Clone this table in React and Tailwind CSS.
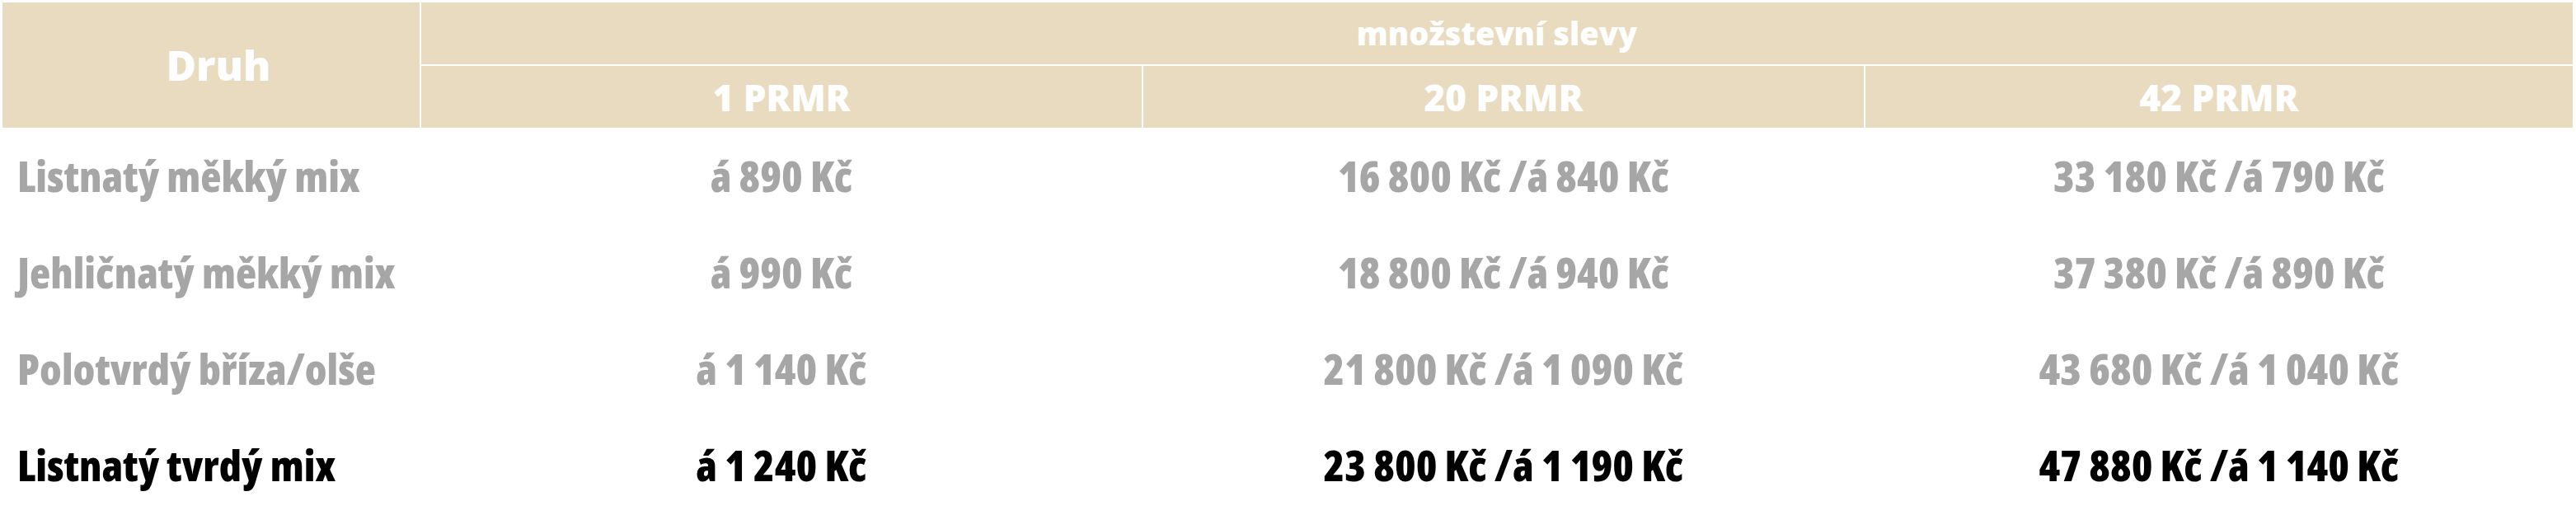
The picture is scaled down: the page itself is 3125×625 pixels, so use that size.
const rows = [
  { name: 'Listnatý měkký mix', p1: 'á 890 Kč', p20: '16 800 Kč /á 840 Kč', p42: '33 180 Kč /á 790 Kč' },
  { name: 'Jehličnatý měkký mix', p1: 'á 990 Kč', p20: '18 800 Kč /á 940 Kč', p42: '37 380 Kč /á 890 Kč' },
  { name: 'Polotvrdý bříza/olše', p1: 'á 1 140 Kč', p20: '21 800 Kč /á 1 090 Kč', p42: '43 680 Kč /á 1 040 Kč' },
  { name: 'Listnatý tvrdý mix', p1: 'á 1 240 Kč', p20: '23 800 Kč /á 1 190 Kč', p42: '47 880 Kč /á 1 140 Kč', dark: true },
];

export default function App() {
  return (
    <div className="w-[3125px] h-[625px] bg-white p-px font-['Open_Sans',sans-serif]">
      <table className="w-[3122px] border-collapse table-fixed">
        <colgroup>
          <col className="w-[508px]" />
          <col className="w-[876px]" />
          <col className="w-[876px]" />
          <col />
        </colgroup>
        <thead>
          <tr className="h-[77px]">
            <th rowSpan={2} className="bg-[#e8dbc0] border-2 border-white pl-[18px] text-white text-[50px] font-extrabold">
              Druh
            </th>
            <th colSpan={3} className="bg-[#e8dbc0] border-2 border-white text-white text-[38px] font-extrabold">
              množstevní slevy
            </th>
          </tr>
          <tr className="h-[77px]">
            <th className="bg-[#e8dbc0] border-2 border-white text-white text-[44px] font-extrabold">1 PRMR</th>
            <th className="bg-[#e8dbc0] border-2 border-white text-white text-[44px] font-extrabold">20 PRMR</th>
            <th className="bg-[#e8dbc0] border-2 border-white text-white text-[44px] font-extrabold">42 PRMR</th>
          </tr>
        </thead>
        <tbody className="[font-stretch:75%]">
          {rows.map((r) => (
            <tr key={r.name} className={`h-[117px] text-[52px] font-extrabold ${r.dark ? 'text-black' : 'text-[#a6a6a6]'}`}>
              <td className="pl-[19px] pb-[4px] text-left whitespace-nowrap">{r.name}</td>
              <td className="pb-[4px] text-center whitespace-nowrap">{r.p1}</td>
              <td className="pb-[4px] text-center whitespace-nowrap">{r.p20}</td>
              <td className="pb-[4px] text-center whitespace-nowrap">{r.p42}</td>
            </tr>
          ))}
        </tbody>
      </table>
    </div>
  );
}
